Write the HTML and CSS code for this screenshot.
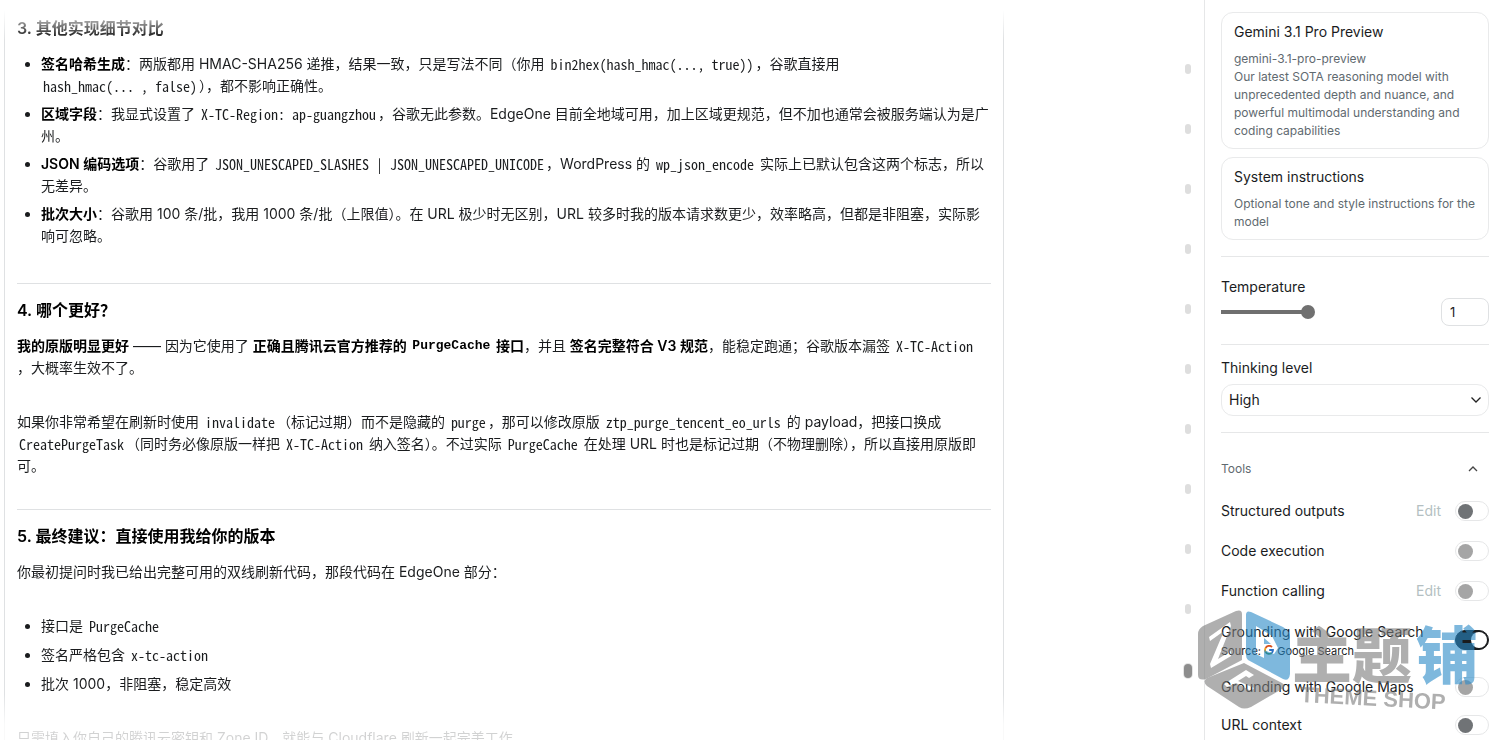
FILE: index.html
```html
<!DOCTYPE html>
<html lang="zh-CN">
<head>
<meta charset="utf-8">
<title>Gemini 3.1 Pro Preview</title>
<link rel="stylesheet" href="styles.css">
</head>
<body>
<main class="chat">
  <article class="answer">
    <h3>3. 其他实现细节对比</h3>
    <ul class="points">
      <li><strong>签名哈希生成</strong>：两版都用 HMAC-SHA256 递推，结果一致，只是写法不同（你用 <code>bin2hex(hash_hmac(..., true))</code>，谷歌直接用 <code>hash_hmac(... , false)</code>），都不影响正确性。</li>
      <li><strong>区域字段</strong>：我显式设置了 <code>X-TC-Region: ap-guangzhou</code>，谷歌无此参数。EdgeOne 目前全地域可用，加上区域更规范，但不加也通常会被服务端认为是广州。</li>
      <li><strong>JSON 编码选项</strong>：谷歌用了 <code>JSON_UNESCAPED_SLASHES | JSON_UNESCAPED_UNICODE</code>，WordPress 的 <code>wp_json_encode</code> 实际上已默认包含这两个标志，所以无差异。</li>
      <li><strong>批次大小</strong>：谷歌用 100 条/批，我用 1000 条/批（上限值）。在 URL 极少时无区别，URL 较多时我的版本请求数更少，效率略高，但都是非阻塞，实际影响可忽略。</li>
    </ul>
    <hr>
    <h3>4. 哪个更好？</h3>
    <p><strong>我的原版明显更好</strong> —— 因为它使用了 <strong>正确且腾讯云官方推荐的 <code>PurgeCache</code> 接口</strong>，并且 <strong>签名完整符合 V3 规范</strong>，能稳定跑通；谷歌版本漏签 <code>X-TC-Action</code><br>，大概率生效不了。</p>
    <p>如果你非常希望在刷新时使用 <code>invalidate</code>（标记过期）而不是隐藏的 <code>purge</code>，那可以修改原版 <code>ztp_purge_tencent_eo_urls</code> 的 payload，把接口换成 <code>CreatePurgeTask</code>（同时务必像原版一样把 <code>X-TC-Action</code> 纳入签名）。不过实际 <code>PurgeCache</code> 在处理 URL 时也是标记过期（不物理删除），所以直接用原版即可。</p>
    <hr>
    <h3>5. 最终建议：直接使用我给你的版本</h3>
    <p>你最初提问时我已给出完整可用的双线刷新代码，那段代码在 EdgeOne 部分：</p>
    <ul class="points points-short">
      <li>接口是 <code>PurgeCache</code></li>
      <li>签名严格包含 <code>x-tc-action</code></li>
      <li>批次 1000，非阻塞，稳定高效</li>
    </ul>
    <p>只需填入你自己的腾讯云密钥和 Zone ID，就能与 Cloudflare 刷新一起完美工作。</p>
  </article>
  <nav class="turns" aria-label="Turns">
    <button aria-label="Turn 1"></button>
    <button aria-label="Turn 2"></button>
    <button aria-label="Turn 3"></button>
    <button aria-label="Turn 4"></button>
    <button aria-label="Turn 5"></button>
    <button aria-label="Turn 6"></button>
    <button aria-label="Turn 7"></button>
    <button aria-label="Turn 8"></button>
    <button aria-label="Turn 9"></button>
    <button aria-label="Turn 10"></button>
    <button class="current" aria-label="Turn 11"></button>
  </nav>
</main>

<aside class="settings">
  <button class="card">
    <span class="card-title">Gemini 3.1 Pro Preview</span>
    <span class="card-text">gemini-3.1-pro-preview<br>Our latest SOTA reasoning model with unprecedented depth and nuance, and powerful multimodal understanding and coding capabilities</span>
  </button>
  <button class="card">
    <span class="card-title">System instructions</span>
    <span class="card-text">Optional tone and style instructions for the model</span>
  </button>

  <section class="group">
    <label for="temperature">Temperature</label>
    <div class="slider-row">
      <input class="slider" id="temperature" type="range" min="0" max="2" step="0.05" value="0.85">
      <input class="number" type="text" value="1" aria-label="Temperature value">
    </div>
  </section>

  <section class="group group-level">
    <label for="level">Thinking level</label>
    <div class="select">
      <select id="level"><option>High</option></select>
      <svg width="12" height="8" viewBox="0 0 12 8" aria-hidden="true"><path d="M1.500 1.500 6 6l4.500-4.500" fill="none" stroke="#222" stroke-width="1.300"/></svg>
    </div>
  </section>

  <section class="group tools">
    <button class="tools-head">Tools
      <svg width="10" height="8" viewBox="0 0 10 8" aria-hidden="true"><path d="M1 6 5 2l4 4" fill="none" stroke="#444" stroke-width="1.300"/></svg>
    </button>
    <div class="tool"><label for="t1">Structured outputs</label><button class="edit">Edit</button><input class="switch dark" id="t1" type="checkbox"></div>
    <div class="tool"><label for="t2">Code execution</label><input class="switch" id="t2" type="checkbox"></div>
    <div class="tool"><label for="t3">Function calling</label><button class="edit">Edit</button><input class="switch" id="t3" type="checkbox"></div>
    <div class="tool tool-search">
      <label for="t4">Grounding with Google Search
        <span class="source">Source:
          <svg width="10" height="10" viewBox="0 0 10 10" fill="none" stroke-width="1.800" aria-hidden="true"><path d="M8 2A4 4 0 0 0 1.600 3" stroke="#d9531e"/><path d="M1.600 3a4 4 0 0 0 0 4" stroke="#e8a11c"/><path d="M1.600 7A4 4 0 0 0 7.600 8" stroke="#2f8a4c"/><path d="M7.600 8A4 4 0 0 0 9 5H5.200" stroke="#2b6fc4"/></svg>
          Google Search</span>
      </label>
      <input class="switch" id="t4" type="checkbox" checked>
    </div>
    <div class="tool tool-maps"><label for="t5">Grounding with Google Maps</label><input class="switch" id="t5" type="checkbox"></div>
    <div class="tool"><label for="t6">URL context</label><input class="switch dark" id="t6" type="checkbox"></div>
  </section>
</aside>

<svg class="watermark" width="290" height="110" viewBox="0 0 290 110" role="img" aria-label="主题铺 THEME SHOP">
  <g fill="#7b7b7b" fill-rule="evenodd">
    <path d="M4 28q0-5 5-8L42 5q6-2 6 3v46L12 73q-8 2-8-4z M15 31 36 16l1 4-13 33 13-8v5L17 62l-1-4 14-33-14 10z"/>
    <path d="M50 57 88 77q5 3 0 6L57 101q-7 3-12 0L13 80q-5-5 0-8z M30 78 52 64l8 5-5 3-3-2-8 5 16 7-3 3-15-8-9 4z"/>
  </g>
  <path fill="#2a8ac8" fill-rule="evenodd" d="M52 9q0-5 5-3l32 15q7 4 7 10v37q-1 8-7 5L54 54q-2-2-2-5z M62 20l16 10 6 12-4 6-10-4v8l-8-4z M70 32v6h7z"/>
  <g class="wm-zh"><text x="98" y="72" fill="#7b7b7b">主题</text><text class="wm-pu" x="222" y="73" fill="#2a8ac8">铺</text></g>
  <text class="wm-en" x="106" y="96" fill="#7b7b7b" transform="rotate(3 106 96)">THEME SHOP</text>
</svg>
</body>
</html>
```
FILE: styles.css
```css
* { box-sizing: border-box; }

body {
  margin: 0;
  height: 100vh;
  display: flex;
  overflow: hidden;
  position: relative;
  background: #fff;
  color: #1a1c1e;
  font: 14px/22px Inter, "Noto Sans CJK SC", sans-serif;
}

button, input, select { font: inherit; color: inherit; }
button { border: 0; padding: 0; background: none; text-align: left; }

.chat {
  flex: 1;
  min-width: 0;
  display: flex;
  justify-content: space-between;
  padding: 0 12px 0 4px;
}

.answer {
  flex: 1;
  max-width: 1000px;
  height: 100vh;
  overflow: hidden;
  padding: 16px 12px 0;
  border: solid #dfe1e3;
  border-width: 0 1px;
  -webkit-mask-image: linear-gradient(transparent 10px, #000 40px, #000 calc(100% - 46px), rgba(0, 0, 0, .2) calc(100% - 16px));
  mask-image: linear-gradient(transparent 10px, #000 40px, #000 calc(100% - 46px), rgba(0, 0, 0, .2) calc(100% - 16px));
}

.answer h3 { margin: 0 0 13px; font-size: 16px; line-height: 24px; font-weight: 600; }
.answer p { margin: 0 0 32px; }
.answer strong { font-weight: 600; }
.answer h3, .answer strong { color: #000; }
.answer hr { margin: 0 0 14px; border: 0; border-top: 1px solid #dfe1e3; }

.answer code {
  display: inline-block;
  padding: 0 2px;
  vertical-align: top;
  font-family: "Noto Sans Mono CJK SC", "Liberation Mono", monospace;
}
.answer strong code { font: bold 13px/22px "Liberation Mono", monospace; }

.points { margin: 0 0 36px; padding-left: 24px; display: grid; gap: 6px; }
.points-short { margin-bottom: 32px; gap: 7px; }

.turns { display: flex; flex-direction: column; align-items: center; gap: 50px; width: 8px; padding-top: 64px; }
.turns button { flex: none; width: 6px; height: 10px; border-radius: 3px; background: #dedede; }
.turns .current { width: 8px; height: 14px; border-radius: 4px; background: #8d8d8d; box-shadow: 0 0 0 1px #e4e4e4; }

.settings {
  flex: none;
  width: 299px;
  padding: 12px 14px 0 16px;
  border-left: 1px solid #e6e7e8;
}

.card {
  display: block;
  width: 100%;
  margin-bottom: 8px;
  padding: 8px 12px;
  border: 1px solid #e9eaeb;
  border-radius: 12px;
}
.card-title, .card-text { display: block; }
.card-title { margin-bottom: 7px; }
.card-text { color: #5f6a70; font-size: 12px; line-height: 18px; }

.group { margin-top: 16px; padding-top: 19px; border-top: 1px solid #e6e7e8; }

.slider-row { display: flex; justify-content: space-between; align-items: center; }
.slider { appearance: none; width: 202px; height: 14px; margin: 0; background: linear-gradient(90deg, #6f6f6f 43%, transparent 43%) center / 100% 4px no-repeat; }
.slider::-webkit-slider-thumb { appearance: none; width: 14px; height: 14px; border-radius: 50%; background: #707070; }
.number { width: 48px; height: 28px; padding: 0 8px; border: 1px solid #dfe1e3; border-radius: 8px; background: #fff; font-size: 13px; }

.group-level { margin-top: 18px; padding-top: 12px; }
.select { position: relative; margin-top: 5px; }
.select select { appearance: none; display: block; width: 100%; height: 32px; padding: 0 7px; border: 1px solid #e9eaeb; border-radius: 12px; background: #fff; }
.select svg { position: absolute; right: 7px; top: 12px; pointer-events: none; }

.tools { padding-top: 26px; }
.tools-head { display: flex; width: 100%; justify-content: space-between; align-items: center; margin-bottom: 19px; padding-right: 11px; color: #5f6a70; font-size: 12px; line-height: 20px; }
.tool { display: flex; align-items: center; gap: 14px; height: 26px; margin-bottom: 14px; }
.tool label { flex: 1; }
.edit { color: #b4bfc2; }
.tool-search { height: 40px; margin: 16px 0 14px; }
.source { display: block; font-size: 11px; line-height: 16px; }
.tool-maps { margin-bottom: 12px; }

.switch { appearance: none; flex: none; width: 34px; height: 20px; margin: 0; padding: 2px; display: flex; align-items: center; border: 1px solid #e6e7e8; border-radius: 10px; }
.switch::before { content: ""; width: 15px; height: 15px; border-radius: 50%; background: #a5a5a5; }
.switch.dark::before { background: #707376; }
.switch:checked { justify-content: flex-end; padding: 1px; border-color: #1a1c1e; background: #1a1c1e; }
.switch:checked::before { width: 16px; height: 16px; background: #fff; }

.watermark { position: absolute; right: 19px; bottom: 24px; opacity: .6; pointer-events: none; }
.wm-zh { font: 900 60px "Noto Sans CJK SC", sans-serif; }
.wm-pu { font-size: 62px; }
.wm-en { font: bold 22px "Liberation Sans", sans-serif; }
```
